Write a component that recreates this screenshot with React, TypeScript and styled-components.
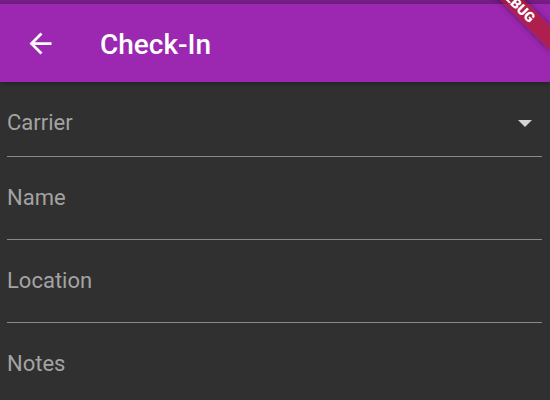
import styled, { createGlobalStyle } from 'styled-components';

const GlobalStyle = createGlobalStyle`
    html, body {
        margin: 0;
        padding: 0;
        background: #303030;
    }
    body {
        font-family: Roboto, "Noto Sans", "Liberation Sans", sans-serif;
    }
`

const Screen = styled.div`
    position: relative;
    width: 550px;
    height: 400px;
    overflow: hidden;
    background: #303030;
    display: flex;
    flex-direction: column;
`

const StatusBar = styled.div`
    flex-shrink: 0;
    height: 4px;
    background: #761d86;
`

const AppBar = styled.header`
    flex-shrink: 0;
    position: relative;
    z-index: 1;
    display: flex;
    align-items: center;
    height: 78px;
    background: #9c27b0;
    color: #fff;
    box-shadow: 0 2px 4px rgba(0, 0, 0, 0.28);
`

const BackButton = styled.button`
    display: flex;
    align-items: center;
    justify-content: center;
    width: 80px;
    height: 78px;
    padding: 0;
    border: none;
    background: transparent;
    color: #fff;
    cursor: pointer;
`

const Title = styled.h1`
    margin: 3px 0 0 20px;
    font-size: 28px;
    line-height: 28px;
    font-weight: 500;
    color: #fff;
`

const Form = styled.form`
    display: flex;
    flex-direction: column;
    padding: 0 8px 0 7px;
`

const Field = styled.div<{ $height: number }>`
    box-sizing: border-box;
    height: ${({ $height }) => $height}px;
    padding-top: 30px;
    border-bottom: 1px solid #898989;
    flex-shrink: 0;
`

const DropdownRow = styled.div`
    display: flex;
    align-items: center;
    justify-content: space-between;
`

const Label = styled.span`
    font-size: 22px;
    line-height: 22px;
    color: #a3a3a3;
`

const DropArrow = styled.svg`
    margin-right: 10px;
    display: block;
`

const DebugBanner = styled.div`
    position: absolute;
    z-index: 5;
    left: 461px;
    top: -4px;
    width: 111px;
    height: 17px;
    transform: rotate(45deg);
    background: rgba(183, 28, 28, 0.66);
    box-shadow: 0 0 6px rgba(0, 0, 0, 0.45);
    color: #fff;
    font-size: 14px;
    font-weight: 900;
    line-height: 17px;
    text-align: center;
`

const fields = ['Name', 'Location', 'Notes']

const App = () => {
    return (
        <Screen>
            <GlobalStyle />
            <StatusBar />
            <AppBar>
                <BackButton type="button" aria-label="Back">
                    <svg width="33" height="33" viewBox="0 0 24 24" fill="currentColor">
                        <path d="M20 11H7.83l5.59-5.59L12 4l-8 8 8 8 1.41-1.41L7.83 13H20v-2z" />
                    </svg>
                </BackButton>
                <Title>Check-In</Title>
            </AppBar>
            <Form>
                <Field $height={75}>
                    <DropdownRow>
                        <Label>Carrier</Label>
                        <DropArrow width="14" height="7" viewBox="0 0 10 5">
                            <path d="M0 0l5 5 5-5z" fill="#d4d4d4" />
                        </DropArrow>
                    </DropdownRow>
                </Field>
                {fields.map((f) => (
                    <Field key={f} $height={83}>
                        <Label>{f}</Label>
                    </Field>
                ))}
            </Form>
            <DebugBanner>DEBUG</DebugBanner>
        </Screen>
    )
}

export default App
